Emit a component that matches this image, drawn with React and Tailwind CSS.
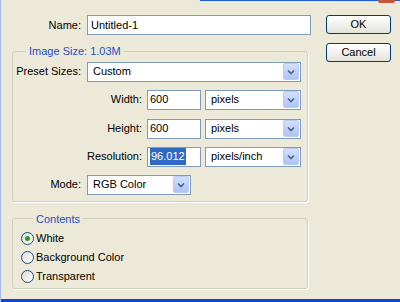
import React from 'react';

const Arrow = () => (
  <span className="ml-auto mr-[1px] flex h-[17px] w-[16px] items-center justify-center rounded-[2px] border border-[#B9CBF3] bg-gradient-to-b from-[#D3E0FC] to-[#AFC4F5]">
    <svg width="8" height="6" viewBox="0 0 8 6">
      <path d="M1 1.5 L4 4.5 L7 1.5" fill="none" stroke="#4D6185" strokeWidth="1.6" />
    </svg>
  </span>
);

const Select = ({ value, w }) => (
  <div className={`flex h-[20px] ${w} items-center border border-[#7F9DB9] bg-white pl-[5px]`}>
    <span>{value}</span>
    <Arrow />
  </div>
);

const Input = ({ children, w }) => (
  <div className={`flex h-[20px] ${w} items-center border border-[#7F9DB9] bg-white pl-[2px]`}>
    {children}
  </div>
);

const Radio = ({ label, checked }) => (
  <div className="flex h-[13px] items-center">
    <span className="flex h-[13px] w-[13px] items-center justify-center rounded-full border border-[#1C5180] bg-gradient-to-br from-[#DCDBD3] to-white">
      {checked && <span className="h-[5px] w-[5px] rounded-full bg-[#21A121]" />}
    </span>
    <span className="ml-[2px]">{label}</span>
  </div>
);

const Button = ({ children, className }) => (
  <div className={`flex h-[19px] w-[65px] items-center justify-center rounded-[3px] border border-[#003C74] bg-gradient-to-b from-white to-[#E3E2DA] ${className}`}>
    {children}
  </div>
);

export default function App() {
  return (
    <div className="relative h-[302px] w-[400px] overflow-hidden border-l border-[#A6B8E4] bg-[#ECE9D8] text-[11px] text-black font-['Liberation_Sans',Arial,sans-serif]">
      {/* window chrome bits */}
      <div className="absolute right-0 top-0 h-[1px] w-[200px] bg-[#1C5AE0]" />
      <div className="absolute right-[5px] top-0 h-[3px] w-[17px] rounded-b-[2px] bg-[#C8553B]" />

      <div className="flex pt-[15px]">
        <div className="w-[310px]">
          {/* Name */}
          <div className="flex items-center">
            <span className="w-[80px] text-right">Name:</span>
            <div className="ml-[6px] flex h-[20px] w-[224px] items-center border border-[#7F9DB9] bg-white pl-[3px]">
              Untitled-1
            </div>
          </div>

          {/* Image Size */}
          <fieldset className="ml-[11px] mt-[8px] w-[296px] rounded-[3px] border border-[#D0D0BF] pb-[6px] shadow-[1px_1px_0_#fff]">
            <legend className="ml-[13px] px-[3px] text-[#1E50C3]">Image Size: 1.03M</legend>
            <div className="mt-[2px] flex items-center">
              <span className="w-[68px] text-right">Preset Sizes:</span>
              <div className="ml-[6px]"><Select value="Custom" w="w-[214px]" /></div>
            </div>
            <div className="mt-[8px] flex items-center">
              <span className="w-[129px] text-right">Width:</span>
              <div className="ml-[5px]"><Input w="w-[54px]">600</Input></div>
              <div className="ml-[4px]"><Select value="pixels" w="w-[96px]" /></div>
            </div>
            <div className="mt-[9px] flex items-center">
              <span className="w-[129px] text-right">Height:</span>
              <div className="ml-[5px]"><Input w="w-[54px]">600</Input></div>
              <div className="ml-[4px]"><Select value="pixels" w="w-[96px]" /></div>
            </div>
            <div className="mt-[8px] flex items-center">
              <span className="w-[129px] text-right">Resolution:</span>
              <div className="ml-[5px]">
                <Input w="w-[54px]"><span className="bg-[#316AC5] px-[1px] text-white">96.012</span></Input>
              </div>
              <div className="ml-[4px]"><Select value="pixels/inch" w="w-[96px]" /></div>
            </div>
            <div className="mt-[8px] flex items-center">
              <span className="w-[68px] text-right">Mode:</span>
              <div className="ml-[6px]"><Select value="RGB Color" w="w-[104px]" /></div>
            </div>
          </fieldset>

          {/* Contents */}
          <fieldset className="ml-[11px] mt-[9px] w-[296px] rounded-[3px] border border-[#D0D0BF] pb-[5px] pl-[8px] shadow-[1px_1px_0_#fff]">
            <legend className="ml-[12px] px-[3px] text-[#1E50C3]">Contents</legend>
            <div className="mt-[5px] flex flex-col gap-[6px]">
              <Radio label="White" checked />
              <Radio label="Background Color" />
              <Radio label="Transparent" />
            </div>
          </fieldset>
        </div>

        <div className="ml-[15px] flex flex-col">
          <Button>OK</Button>
          <Button className="mt-[9px]">Cancel</Button>
        </div>
      </div>

      <div className="absolute bottom-0 left-0 h-[3px] w-full bg-[#0B47D6]" />
    </div>
  );
}
